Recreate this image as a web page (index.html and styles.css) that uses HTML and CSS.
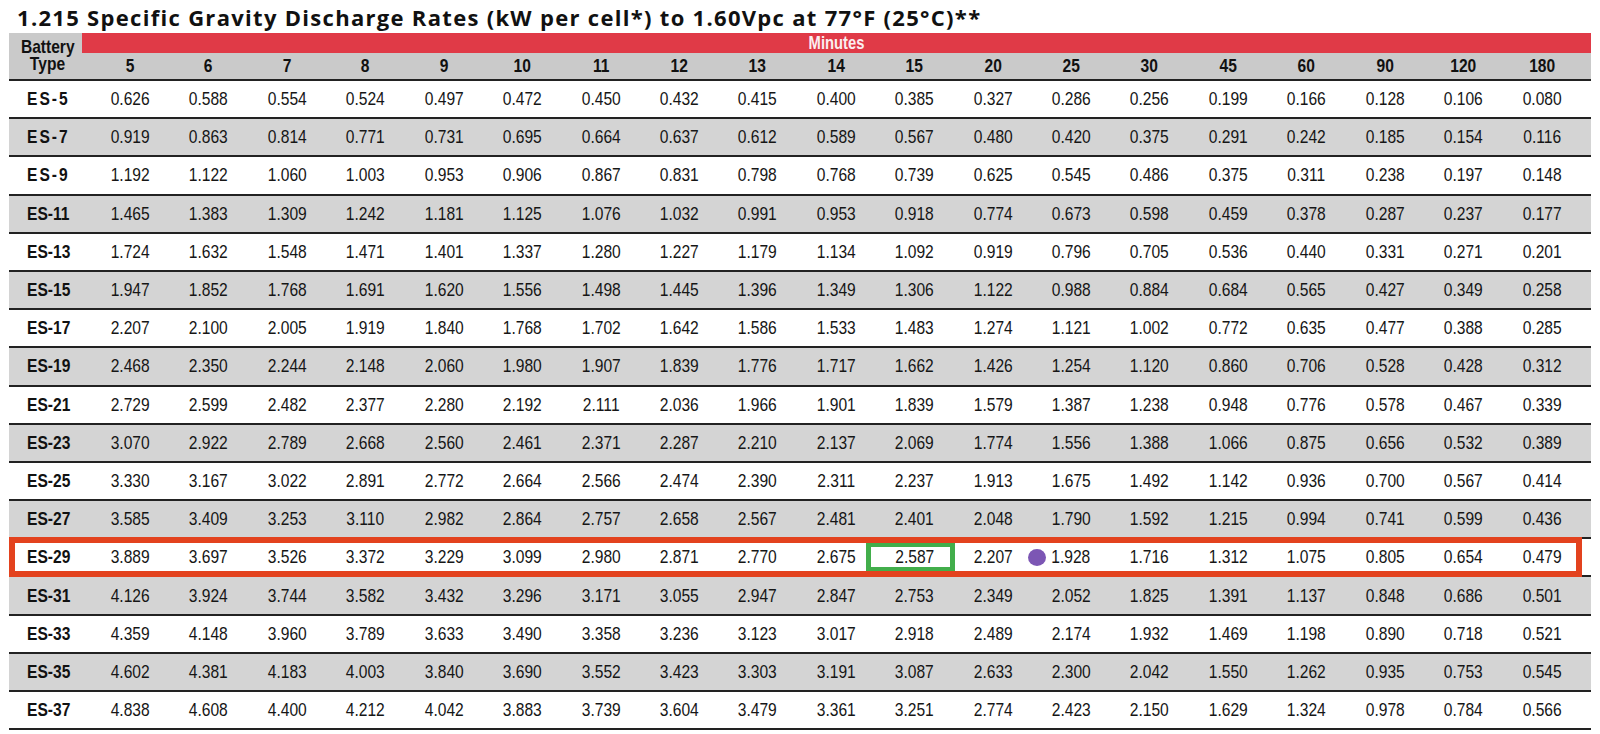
FILE: index.html
```html
<!DOCTYPE html>
<html lang="en">
<head>
<meta charset="utf-8">
<title>1.215 Specific Gravity Discharge Rates</title>
<link rel="stylesheet" href="styles.css">
</head>
<body>
<div class="sheet">
  <h1 class="title">1.215 Specific Gravity Discharge Rates (kW per cell*) to 1.60Vpc at 77°F (25°C)**</h1>
  <div class="table">
    <div class="thead">
      <div class="th-battery"><span class="narrow">Battery</span><span class="narrow">Type</span></div>
      <div class="th-main">
        <div class="minutes-bar"><span class="narrow">Minutes</span></div>
        <div class="minute-cols">
          <span>5</span><span>6</span><span>7</span><span>8</span><span>9</span><span>10</span><span>11</span><span>12</span><span>13</span><span>14</span><span>15</span><span>20</span><span>25</span><span>30</span><span>45</span><span>60</span><span>90</span><span>120</span><span>180</span>
        </div>
      </div>
    </div>
    <div class="row"><span class="type short">ES-5</span><span>0.626</span><span>0.588</span><span>0.554</span><span>0.524</span><span>0.497</span><span>0.472</span><span>0.450</span><span>0.432</span><span>0.415</span><span>0.400</span><span>0.385</span><span>0.327</span><span>0.286</span><span>0.256</span><span>0.199</span><span>0.166</span><span>0.128</span><span>0.106</span><span>0.080</span></div>
    <div class="row alt"><span class="type short">ES-7</span><span>0.919</span><span>0.863</span><span>0.814</span><span>0.771</span><span>0.731</span><span>0.695</span><span>0.664</span><span>0.637</span><span>0.612</span><span>0.589</span><span>0.567</span><span>0.480</span><span>0.420</span><span>0.375</span><span>0.291</span><span>0.242</span><span>0.185</span><span>0.154</span><span>0.116</span></div>
    <div class="row"><span class="type short">ES-9</span><span>1.192</span><span>1.122</span><span>1.060</span><span>1.003</span><span>0.953</span><span>0.906</span><span>0.867</span><span>0.831</span><span>0.798</span><span>0.768</span><span>0.739</span><span>0.625</span><span>0.545</span><span>0.486</span><span>0.375</span><span>0.311</span><span>0.238</span><span>0.197</span><span>0.148</span></div>
    <div class="row alt"><span class="type">ES-11</span><span>1.465</span><span>1.383</span><span>1.309</span><span>1.242</span><span>1.181</span><span>1.125</span><span>1.076</span><span>1.032</span><span>0.991</span><span>0.953</span><span>0.918</span><span>0.774</span><span>0.673</span><span>0.598</span><span>0.459</span><span>0.378</span><span>0.287</span><span>0.237</span><span>0.177</span></div>
    <div class="row"><span class="type">ES-13</span><span>1.724</span><span>1.632</span><span>1.548</span><span>1.471</span><span>1.401</span><span>1.337</span><span>1.280</span><span>1.227</span><span>1.179</span><span>1.134</span><span>1.092</span><span>0.919</span><span>0.796</span><span>0.705</span><span>0.536</span><span>0.440</span><span>0.331</span><span>0.271</span><span>0.201</span></div>
    <div class="row alt"><span class="type">ES-15</span><span>1.947</span><span>1.852</span><span>1.768</span><span>1.691</span><span>1.620</span><span>1.556</span><span>1.498</span><span>1.445</span><span>1.396</span><span>1.349</span><span>1.306</span><span>1.122</span><span>0.988</span><span>0.884</span><span>0.684</span><span>0.565</span><span>0.427</span><span>0.349</span><span>0.258</span></div>
    <div class="row"><span class="type">ES-17</span><span>2.207</span><span>2.100</span><span>2.005</span><span>1.919</span><span>1.840</span><span>1.768</span><span>1.702</span><span>1.642</span><span>1.586</span><span>1.533</span><span>1.483</span><span>1.274</span><span>1.121</span><span>1.002</span><span>0.772</span><span>0.635</span><span>0.477</span><span>0.388</span><span>0.285</span></div>
    <div class="row alt"><span class="type">ES-19</span><span>2.468</span><span>2.350</span><span>2.244</span><span>2.148</span><span>2.060</span><span>1.980</span><span>1.907</span><span>1.839</span><span>1.776</span><span>1.717</span><span>1.662</span><span>1.426</span><span>1.254</span><span>1.120</span><span>0.860</span><span>0.706</span><span>0.528</span><span>0.428</span><span>0.312</span></div>
    <div class="row"><span class="type">ES-21</span><span>2.729</span><span>2.599</span><span>2.482</span><span>2.377</span><span>2.280</span><span>2.192</span><span>2.111</span><span>2.036</span><span>1.966</span><span>1.901</span><span>1.839</span><span>1.579</span><span>1.387</span><span>1.238</span><span>0.948</span><span>0.776</span><span>0.578</span><span>0.467</span><span>0.339</span></div>
    <div class="row alt"><span class="type">ES-23</span><span>3.070</span><span>2.922</span><span>2.789</span><span>2.668</span><span>2.560</span><span>2.461</span><span>2.371</span><span>2.287</span><span>2.210</span><span>2.137</span><span>2.069</span><span>1.774</span><span>1.556</span><span>1.388</span><span>1.066</span><span>0.875</span><span>0.656</span><span>0.532</span><span>0.389</span></div>
    <div class="row"><span class="type">ES-25</span><span>3.330</span><span>3.167</span><span>3.022</span><span>2.891</span><span>2.772</span><span>2.664</span><span>2.566</span><span>2.474</span><span>2.390</span><span>2.311</span><span>2.237</span><span>1.913</span><span>1.675</span><span>1.492</span><span>1.142</span><span>0.936</span><span>0.700</span><span>0.567</span><span>0.414</span></div>
    <div class="row alt"><span class="type">ES-27</span><span>3.585</span><span>3.409</span><span>3.253</span><span>3.110</span><span>2.982</span><span>2.864</span><span>2.757</span><span>2.658</span><span>2.567</span><span>2.481</span><span>2.401</span><span>2.048</span><span>1.790</span><span>1.592</span><span>1.215</span><span>0.994</span><span>0.741</span><span>0.599</span><span>0.436</span></div>
    <div class="row highlight"><span class="type">ES-29</span><span>3.889</span><span>3.697</span><span>3.526</span><span>3.372</span><span>3.229</span><span>3.099</span><span>2.980</span><span>2.871</span><span>2.770</span><span>2.675</span><span class="picked"><span class="val">2.587</span></span><span>2.207</span><span class="dotted"><i class="dot"></i><span class="val">1.928</span></span><span>1.716</span><span>1.312</span><span>1.075</span><span>0.805</span><span>0.654</span><span>0.479</span></div>
    <div class="row alt"><span class="type">ES-31</span><span>4.126</span><span>3.924</span><span>3.744</span><span>3.582</span><span>3.432</span><span>3.296</span><span>3.171</span><span>3.055</span><span>2.947</span><span>2.847</span><span>2.753</span><span>2.349</span><span>2.052</span><span>1.825</span><span>1.391</span><span>1.137</span><span>0.848</span><span>0.686</span><span>0.501</span></div>
    <div class="row"><span class="type">ES-33</span><span>4.359</span><span>4.148</span><span>3.960</span><span>3.789</span><span>3.633</span><span>3.490</span><span>3.358</span><span>3.236</span><span>3.123</span><span>3.017</span><span>2.918</span><span>2.489</span><span>2.174</span><span>1.932</span><span>1.469</span><span>1.198</span><span>0.890</span><span>0.718</span><span>0.521</span></div>
    <div class="row alt"><span class="type">ES-35</span><span>4.602</span><span>4.381</span><span>4.183</span><span>4.003</span><span>3.840</span><span>3.690</span><span>3.552</span><span>3.423</span><span>3.303</span><span>3.191</span><span>3.087</span><span>2.633</span><span>2.300</span><span>2.042</span><span>1.550</span><span>1.262</span><span>0.935</span><span>0.753</span><span>0.545</span></div>
    <div class="row"><span class="type">ES-37</span><span>4.838</span><span>4.608</span><span>4.400</span><span>4.212</span><span>4.042</span><span>3.883</span><span>3.739</span><span>3.604</span><span>3.479</span><span>3.361</span><span>3.251</span><span>2.774</span><span>2.423</span><span>2.150</span><span>1.629</span><span>1.324</span><span>0.978</span><span>0.784</span><span>0.566</span></div>
  </div>
</div>
</body>
</html>
```

FILE: styles.css
```css
html, body {
  margin: 0;
  padding: 0;
  background: #ffffff;
}

.sheet {
  width: 1600px;
  height: 734px;
  overflow: hidden;
}

.title {
  margin: 0;
  padding: 2px 0 0 17px;
  height: 31px;
  line-height: 31px;
  font-family: "Open Sans", "Liberation Sans", sans-serif;
  font-weight: 700;
  font-size: 22px;
  letter-spacing: 1.3px;
  color: #111111;
  white-space: nowrap;
}

.table {
  margin-left: 9px;
  width: 1582px;
  font-family: "Liberation Sans", Arial, sans-serif;
  color: #161616;
}

/* Arial Narrow look: Liberation Sans compressed horizontally */
.narrow,
.minute-cols > span,
.row > span,
.val {
  display: block;
  transform: scaleX(0.82);
  white-space: nowrap;
}

.thead {
  display: flex;
  height: 48px;
  box-sizing: border-box;
  background: #cacaca;
  border-bottom: 2px solid #222222;
}

.th-battery {
  width: 73px;
  box-sizing: border-box;
  padding: 5px 0 0 4px;
  display: flex;
  flex-direction: column;
  align-items: center;
  font-weight: 700;
  font-size: 19px;
  line-height: 17px;
  color: #111111;
}

.th-main {
  flex: 1;
  display: flex;
  flex-direction: column;
}

.minutes-bar {
  height: 20px;
  background: #e03a47;
  color: #fbeef0;
  text-align: center;
  font-weight: 700;
  font-size: 18px;
  line-height: 20px;
}

.minute-cols {
  flex: 1;
  display: grid;
  grid-template-columns: repeat(19, 1fr);
  padding: 0 10px 0 9px;
  align-items: center;
  font-weight: 700;
  font-size: 19px;
  color: #111111;
  text-align: center;
}

.row {
  position: relative;
  display: grid;
  grid-template-columns: 82px repeat(19, 1fr) 10px;
  height: 38.2px;
  box-sizing: border-box;
  border-bottom: 2px solid #222222;
  align-items: center;
  font-size: 19px;
  text-align: center;
  background: #ffffff;
}

.row.alt {
  background: #d4d4d4;
}

.row > .type {
  text-align: left;
  transform-origin: left center;
  padding-left: 22px;
  font-weight: 700;
  color: #111111;
}

.row > .type.short {
  letter-spacing: 2.4px;
}

.row.highlight::after {
  content: "";
  position: absolute;
  left: 0;
  right: 9px;
  top: -2px;
  bottom: -2px;
  border: 6px solid #e3421e;
  pointer-events: none;
}

.row > .picked,
.row > .dotted {
  transform: none;
  position: relative;
  align-self: stretch;
  display: flex;
  align-items: center;
  justify-content: center;
}

.picked::after {
  content: "";
  position: absolute;
  left: -9px;
  right: -1px;
  top: 3px;
  bottom: 3px;
  border: 5px solid #42ae4b;
}

.dot {
  position: absolute;
  left: -4px;
  top: 50%;
  width: 18px;
  height: 17px;
  margin-top: -8px;
  border-radius: 50%;
  background: #7c56b4;
}
```
